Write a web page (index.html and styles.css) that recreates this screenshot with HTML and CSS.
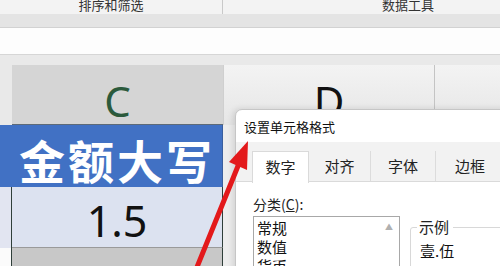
FILE: index.html
```html
<!DOCTYPE html>
<html lang="zh-CN">
<head>
    <meta charset="UTF-8">
    <title>设置单元格格式</title>
    <link rel="stylesheet" href="styles.css">
</head>
<body>
    <div class="ribbon">
        <div class="group group-sort">排序和筛选</div>
        <div class="group group-data">数据工具</div>
    </div>
    <div class="ribbon-foot"></div>
    <div class="formula-bar"></div>
    <div class="gap"></div>

    <div class="sheet">
        <div class="corner"></div>
        <div class="col-head col-c">C</div>
        <div class="col-head col-d">D</div>
        <div class="col-head col-e"></div>

        <div class="row-head row-blue"></div>
        <div class="cell cell-title">金额大写</div>
        <div class="cell cell-side"></div>
        <div class="cell cell-side"></div>

        <div class="row-head row-light"></div>
        <div class="cell cell-value">1.5</div>
        <div class="cell cell-side"></div>
        <div class="cell cell-side"></div>

        <div class="row-head row-white"></div>
        <div class="cell cell-next">2.0</div>
        <div class="cell cell-side"></div>
        <div class="cell cell-side"></div>
    </div>

    <!-- format cells dialog -->
    <div class="dialog">
        <div class="dialog-title">设置单元格格式</div>
        <div class="tabs">
            <div class="tab active">数字</div>
            <div class="tab">对齐</div>
            <div class="tab">字体</div>
            <div class="tab">边框</div>
        </div>
        <div class="dialog-body">
            <div class="category">
                <div class="label">分类(<u>C</u>):</div>
                <div class="listbox">
                    <div class="item">常规</div>
                    <div class="item">数值</div>
                    <div class="item">货币</div>
                    <span class="scroll-up">▲</span>
                </div>
            </div>
            <div class="sample">
                <div class="sample-label">示例</div>
                <div class="sample-value">壹.伍</div>
            </div>
        </div>
    </div>

    <svg class="arrow" width="500" height="266" viewBox="0 0 500 266">
        <line x1="195" y1="272" x2="238" y2="166" stroke="#e3191b" stroke-width="5" stroke-linecap="round"/>
        <polygon points="248,141 247,170 229,162" fill="#e3191b"/>
    </svg>
</body>
</html>
```

FILE: styles.css
```css
body {
    margin: 0;
    width: 500px;
    height: 266px;
    overflow: hidden;
    position: relative;
    font-family: "Noto Sans CJK SC", sans-serif;
    background: #eeeeee;
}
.ribbon {
    display: flex;
    height: 14px;
    background: #f3f3f3;
    overflow: hidden;
}
.group {
    flex-shrink: 0;
    font-size: 13px;
    line-height: 9px;
    color: #333;
    text-align: center;
}
.group-sort {
    width: 222px;
    border-right: 1px solid #c9c9c9;
}
.group-data {
    width: 370px;
}
.ribbon-foot {
    height: 13px;
    background: #e4e4e4;
    border-bottom: 1px solid #d2d2d2;
}
.formula-bar {
    height: 26px;
    background: #fdfdfd;
    border-bottom: 1px solid #d6d6d6;
}
.gap {
    height: 10px;
    background: #e9e9e9;
}
.sheet {
    display: grid;
    grid-template-columns: 12px 211px 212px 65px;
    grid-template-rows: 60px 62px 61px 40px;
}
.corner {
    background: #e9e9e9;
}
.col-head {
    font-family: "Noto Sans", sans-serif;
    font-size: 42px;
    line-height: 42px;
    padding-top: 15px;
    text-align: center;
    box-sizing: border-box;
}
.col-c {
    background: #d5d5d5;
    color: #2b5a3c;
    border-bottom: 1px solid #5d6a78;
}
.col-d {
    background: linear-gradient(#f3f3f3, #e6e6e6);
    color: #111;
    border-left: 1px solid #cfcfcf;
    border-right: 1px solid #c4c4c4;
}
.col-e {
    background: linear-gradient(#f3f3f3, #e6e6e6);
}
.row-head {
    border-right: 1px solid #2f3f3a;
}
.row-blue {
    background: #4171c4;
    border-right: none;
}
.row-light {
    background: #e2e5f1;
}
.row-white {
    background: #fbfbfb;
}
.cell {
    display: flex;
    align-items: center;
    justify-content: center;
}
.cell-title {
    background: #4171c4;
    color: #fff;
    font-weight: bold;
    font-size: 46px;
    letter-spacing: 3px;
    padding-top: 5px;
    border-right: 1px solid #3a5f9f;
}
.cell-value {
    background: #dce2f0;
    font-family: "Noto Sans", sans-serif;
    font-size: 43px;
    color: #111;
    padding-top: 6px;
    border-right: 1px solid #2f3f3a;
    border-bottom: 1px solid #9a9a9a;
}
.cell-next {
    background: #c8c8c8;
    font-family: "Noto Sans", sans-serif;
    font-size: 43px;
    color: #111;
    align-items: flex-start;
    padding-top: 4px;
    border-right: 1px solid #2f3f3a;
}
.cell-side {
    background: #ededed;
}
.dialog {
    position: absolute;
    left: 235px;
    top: 109px;
    width: 280px;
    height: 170px;
    background: #fff;
    border: 1px solid #c6c6c6;
    border-radius: 7px 0 0 0;
    box-shadow: -2px 0 6px rgba(0, 0, 0, 0.12);
}
.dialog-title {
    height: 32px;
    line-height: 34px;
    padding-left: 8px;
    font-size: 13px;
    color: #111;
}
.tabs {
    display: flex;
    height: 40px;
    padding: 9px 0 0 16px;
    box-sizing: border-box;
    background: #f2f2f2;
    border-bottom: 1px solid #dadada;
}
.tab {
    font-size: 15px;
    line-height: 30px;
    color: #222;
    text-align: center;
    box-sizing: border-box;
}
.tab:nth-child(2) {
    width: 62px;
    border-right: 1px solid #dcdcdc;
}
.tab:nth-child(3) {
    width: 65px;
    border-right: 1px solid #dcdcdc;
}
.tab:nth-child(4) {
    width: 68px;
}
.tab.active {
    width: 57px;
    background: #fff;
    border: 1px solid #dadada;
    border-bottom: none;
    margin-bottom: -1px;
    height: 32px;
}
.dialog-body {
    display: flex;
    padding: 12px 0 0 17px;
}
.label {
    font-size: 14px;
    line-height: 20px;
    color: #222;
}
.listbox {
    position: relative;
    width: 142px;
    height: 60px;
    margin-top: 2px;
    padding: 1px 0 0 3px;
    border: 1px solid #a8a8a8;
    font-size: 15px;
    line-height: 19px;
    color: #111;
}
.scroll-up {
    position: absolute;
    right: 6px;
    top: 5px;
    font-size: 8px;
    line-height: 10px;
    color: #b0b0b0;
}
.sample {
    margin: 33px 0 0 10px;
    width: 100px;
    height: 60px;
    border: 1px solid #d8d8d8;
    border-radius: 3px;
    padding-left: 6px;
}
.sample-label {
    font-size: 15px;
    line-height: 16px;
    margin-top: -9px;
    background: #fff;
    width: 34px;
    padding-left: 2px;
    color: #222;
}
.sample-value {
    font-size: 15px;
    margin-top: 5px;
    padding-left: 3px;
    color: #111;
}
.arrow {
    position: absolute;
    left: 0;
    top: 0;
}
```
